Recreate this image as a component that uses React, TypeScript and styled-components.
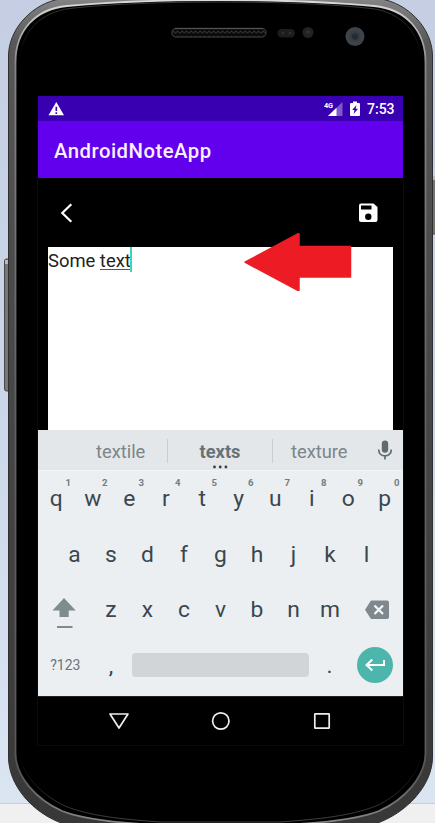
import React from "react";
import styled, { createGlobalStyle } from "styled-components";

const GlobalStyle = createGlobalStyle`
  * { box-sizing: border-box; }
  body { margin: 0; overflow: hidden; font-family: Roboto, "Liberation Sans", sans-serif; }
`;

const Desktop = styled.div`
  position: relative;
  display: flow-root;
  width: 435px;
  height: 823px;
  overflow: hidden;
  background: linear-gradient(#c5cee2 0, #cbd6e9 400px, #dbe5f2 803px, #c9ced5 803px, #c9ced5 804px, #f0f0f0 804px);
`;

const PhoneArt = styled.svg`
  position: absolute;
  inset: 0;
`;

const Screen = styled.main`
  position: relative;
  display: flex;
  flex-direction: column;
  width: 365px;
  height: 649px;
  margin: 96px 0 0 38px;
  background: #000;
`;

const StatusBar = styled.div`
  display: flex;
  align-items: center;
  height: 25px;
  padding: 1px 8px 0 10px;
  color: #fff;
  background: #3800b0;
`;

const StatusIcons = styled.div`
  display: flex;
  align-items: center;
  gap: 7px;
  margin-left: auto;
`;

const Clock = styled.span`
  width: 28px;
  font-size: 14px;
  line-height: 24px;
  font-weight: 500;
  white-space: nowrap;
`;

const AppBar = styled.header`
  display: flex;
  align-items: center;
  height: 57px;
  padding: 3px 16px 0;
  background: #6200ee;
`;

const Title = styled.h1`
  margin: 0;
  color: #f8efff;
  font-size: 20.3px;
  font-weight: 500;
  letter-spacing: 0.5px;
`;

const Toolbar = styled.div`
  display: flex;
  align-items: center;
  justify-content: space-between;
  height: 69px;
  padding: 0 25px 0 20px;
`;

const Editor = styled.section`
  height: 183px;
  margin: 0 10px;
  color: #222;
  background: #fff;
  font-size: 18.4px;
  line-height: 27px;
`;

const Line = styled.div`
  display: flex;
  white-space: pre;
`;

const Composing = styled.span`
  height: 23px;
  border-bottom: 1px solid #555;
`;

const Caret = styled.span`
  flex: none;
  width: 2px;
  height: 25px;
  margin-left: -1px;
  background: #3fd3c2;
`;

const Keyboard = styled.section`
  display: flex;
  flex-direction: column;
  height: 266px;
  background: #ebeff2;
`;

const Suggestions = styled.div`
  display: grid;
  grid-template-columns: 130px 105px 94px 36px;
  height: 41px;
  align-items: center;
  background: #e3e7ea;
  border-bottom: 1px solid #f1f4f5;
`;

const Suggestion = styled.div<{ $main?: boolean; $last?: boolean; $indent?: number }>`
  position: relative;
  height: 24px;
  margin-top: 1px;
  padding-left: ${(p) => p.$indent ?? 0}px;
  border-right: ${(p) => (p.$last ? "0" : "1px solid #c9ced1")};
  color: ${(p) => (p.$main ? "#687276" : "#7c8588")};
  font-size: 18.3px;
  line-height: 25px;
  font-weight: ${(p) => (p.$main ? 700 : 400)};
  text-align: ${(p) => (p.$main ? "center" : "left")};
`;

const MoreDots = styled.svg`
  position: absolute;
  left: 44px;
  top: 26px;
`;

const MicButton = styled.div`
  display: flex;
  justify-content: center;
  padding-right: 1px;
`;

const KeyRow = styled.div<{ $inset?: number }>`
  display: flex;
  height: 55.5px;
  padding: 0 ${(p) => p.$inset ?? 0}px;
`;

const Key = styled.div<{ $w?: number; $small?: boolean }>`
  position: relative;
  display: flex;
  align-items: center;
  justify-content: center;
  width: ${(p) => p.$w ?? 36.5}px;
  flex: none;
  color: ${(p) => (p.$small ? "#6b7578" : "#3a474e")};
  font-size: ${(p) => (p.$small ? 14 : 22.8)}px;
`;

const ShiftIcon = styled.svg`
  margin: 5px 2px 0 0;
`;

const BackspaceIcon = styled.svg`
  margin-left: 2px;
`;

const Hint = styled.sup`
  position: absolute;
  right: 3.5px;
  top: 6px;
  color: #737d81;
  font-size: 9.6px;
  line-height: 12px;
  font-weight: 700;
`;

const SpaceBar = styled.div`
  width: 177px;
  height: 24px;
  margin: 15px 2px 0 3px;
  border-radius: 4px;
  background: #d1d5d8;
`;

const EnterKey = styled.div`
  display: flex;
  align-items: center;
  justify-content: center;
  width: 36px;
  height: 36px;
  margin: 9px 0 0 9.5px;
  border-radius: 50%;
  background: #4db6ac;
`;

const NavBar = styled.nav`
  display: flex;
  align-items: center;
  justify-content: space-between;
  height: 49px;
  padding: 0 72px 0 70px;
  border-top: 1px solid #222;
`;

const CalloutArrow = styled.svg`
  position: absolute;
  left: 205px;
  top: 136px;
`;

const OUTER =
  "M8.5 56 C8.5 31 29 7 55 0 C105 -12 335 -12 386 0 C412 7 432.5 31 432.5 56 V757 C432.5 785 407 813 375 824 C320 840 120 840 64 824 C32 813 8.5 785 8.5 757 Z";
const INNER =
  "M15.5 62 C15.5 31 35 9 67 6 C110 2 160 0 220 0 C280 0 330 2 374 6 C406 9 425.5 31 425.5 62 V753 C425.5 777 404 800 379 811 C359 819 325 823 280 825 H160 C116 823 82 819 62 811 C37 800 15.5 777 15.5 753 Z";
const LIP =
  "M20 62 C20 33 40 12 70 8.5 C110 4 160 2 220 2 C280 2 330 4 371 8.5 C401 12 421 33 421 62 V752 C421 773 400 795 376 806 C350 816 320 819 280 822 H160 C120 819 90 816 65 806 C41 795 20 773 20 752 Z";

function PhoneBody() {
  return (
    <PhoneArt width="435" height="823" viewBox="0 0 435 823">
      <defs>
        <linearGradient id="rim" x1="0" x2="0" y1="0" y2="1">
          <stop offset="0" stopColor="#8c8c8c" />
          <stop offset="0.06" stopColor="#585858" />
          <stop offset="0.3" stopColor="#4c4c4c" />
          <stop offset="1" stopColor="#373737" />
        </linearGradient>
        <linearGradient id="shine" x1="0" x2="0" y1="0" y2="1">
          <stop offset="0" stopColor="#dcdcdc" />
          <stop offset="0.08" stopColor="#858585" />
          <stop offset="0.5" stopColor="#606060" />
          <stop offset="0.94" stopColor="#585858" />
          <stop offset="1" stopColor="#8b8b8b" />
        </linearGradient>
        <linearGradient id="lip" x1="0" x2="0" y1="0" y2="823" gradientUnits="userSpaceOnUse">
          <stop offset="0" stopColor="#3c3c3c" />
          <stop offset="0.07" stopColor="#000" />
          <stop offset="0.92" stopColor="#000" />
          <stop offset="1" stopColor="#444" />
        </linearGradient>
        <pattern id="mesh" width="4.5" height="5" patternUnits="userSpaceOnUse">
          <rect width="4.5" height="5" fill="#080808" />
          <path d="M0 3.5 L2 1 L4.5 3.5" stroke="#363636" fill="none" />
        </pattern>
      </defs>
      <rect x="4.5" y="259" width="6" height="132" rx="2" fill="#777" stroke="#4a4a4a" />
      <rect x="5" y="260" width="3" height="4" fill="#bbb" />
      <rect x="431" y="177" width="7" height="57" rx="1" fill="#77736f" stroke="#4a4a4a" />
      <rect x="432" y="176" width="3" height="4" fill="#bbb" />
      <path d={OUTER} fill="url(#rim)" stroke="#303030" />
      <path d={INNER} fill="#000" stroke="url(#shine)" strokeWidth="1.8" />
      <path d={LIP} fill="none" stroke="url(#lip)" />
      <rect x="172" y="28.5" width="94" height="8.5" rx="4" fill="url(#mesh)" stroke="#303030" strokeWidth="1.5" />
      <path d="M175 28.5H263" stroke="#555" />
      <rect x="277.5" y="29" width="17.5" height="8.5" rx="4.2" fill="#1d1d1d" />
      <circle cx="283" cy="33" r="1.5" fill="#303030" />
      <circle cx="290" cy="33" r="1.5" fill="#303030" />
      <circle cx="308" cy="32.5" r="5.5" fill="#222" />
      <circle cx="308" cy="32" r="2" fill="#303030" />
      <circle cx="355" cy="36.5" r="9.5" fill="#3e4349" />
      <circle cx="355" cy="36.5" r="5.5" fill="#373d45" />
      <circle cx="355" cy="36.5" r="3.2" fill="#262b34" />
      <path d="M37.5 179V745.5H403.5V179" fill="none" stroke="#0c0c0c" />
    </PhoneArt>
  );
}

const TOP_ROW = "qwertyuiop".split("");
const HOME_ROW = "asdfghjkl".split("");
const LOWER_ROW = "zxcvbnm".split("");

export default function App() {
  return (
    <>
      <GlobalStyle />
      <Desktop>
        <PhoneBody />
        <Screen>
          <StatusBar>
            <svg width="17" height="14" viewBox="0 0 17 14">
              <path d="M8.3 0 L16 13.3 H0.5Z" fill="#fff" />
              <path d="M7.5 4.8H9.100V9H7.5ZM7.5 10.3H9.100V12H7.5Z" fill="#3800b0" />
            </svg>
            <StatusIcons>
              <svg width="19" height="16" viewBox="0 0 19 16">
                <path d="M18.5 1V15H4Z" fill="#7d59cc" />
                <path d="M12.5 6.7V15H4Z" fill="#fff" />
                <text x="0" y="7" fontSize="7.3" fontWeight="700" fill="#fff" textLength="9">4G</text>
              </svg>
              <svg width="10" height="16" viewBox="0 0 10 16">
                <path d="M0 3Q0 2 1 2H3V0.5H7V2H9Q10 2 10 3V14Q10 15 9 15H1Q0 15 0 14Z" fill="#fff" />
                <path d="M6.5 4 2.2 9H4.500L3.600 13 8 7.7H5.600Z" fill="#3800b0" />
              </svg>
              <Clock>7:53</Clock>
            </StatusIcons>
          </StatusBar>
          <AppBar>
            <Title>AndroidNoteApp</Title>
          </AppBar>
          <Toolbar>
            <svg width="18" height="22" viewBox="0 0 18 22">
              <path d="M13.3 2.3 4.3 11 13.3 19.7" fill="none" stroke="#fff" strokeWidth="2.2" />
            </svg>
            <svg width="20" height="20" viewBox="0 0 20 20">
              <path d="M3 0.5H15.500L19.5 4V17Q19.5 19 17.5 19H3Q1 19 1 17V2.5Q1 0.5 3 0.5Z" fill="#fff" />
              <path d="M3 2.5H13.5V6.5H3Z" fill="#000" />
              <circle cx="10.3" cy="13.7" r="3.2" fill="#000" />
            </svg>
          </Toolbar>
          <Editor>
            <Line>
              Some <Composing>text</Composing>
              <Caret />
            </Line>
          </Editor>
          <Keyboard>
            <Suggestions>
              <Suggestion $indent={58}>textile</Suggestion>
              <Suggestion $main>
                texts
                <MoreDots width="18" height="5" viewBox="0 0 18 5">
                  <g fill="#353f44">
                    <circle cx="2.5" cy="2" r="1.4" />
                    <circle cx="8.2" cy="2" r="1.4" />
                    <circle cx="13.9" cy="2" r="1.4" />
                  </g>
                </MoreDots>
              </Suggestion>
              <Suggestion $indent={18} $last>texture</Suggestion>
              <MicButton>
                <svg width="16" height="20" viewBox="0 0 16 20">
                  <rect x="4.8" y="0.5" width="6.4" height="12.3" rx="3.2" fill="#5f6b71" />
                  <path d="M1.700 9.5C1.700 18 14.3 18 14.3 9.5M8 16V19.5" fill="none" stroke="#5f6b71" strokeWidth="1.7" />
                </svg>
              </MicButton>
            </Suggestions>
            <KeyRow>
              {TOP_ROW.map((letter, i) => (
                <Key key={letter}>
                  {letter}
                  <Hint>{(i + 1) % 10}</Hint>
                </Key>
              ))}
            </KeyRow>
            <KeyRow $inset={18.25}>
              {HOME_ROW.map((letter) => (
                <Key key={letter}>{letter}</Key>
              ))}
            </KeyRow>
            <KeyRow>
              <Key $w={54.75}>
                <ShiftIcon width="28" height="34" viewBox="0 0 28 34">
                  <path d="M14 3 25.700 15.5H18.700V22H9.500V15.5H2.500Z" fill="#7e8b8f" />
                  <path d="M7 32H22.500" stroke="#7e8b8f" strokeWidth="2" />
                </ShiftIcon>
              </Key>
              {LOWER_ROW.map((letter) => (
                <Key key={letter}>{letter}</Key>
              ))}
              <Key $w={54.75}>
                <BackspaceIcon width="26" height="20" viewBox="0 0 26 20">
                  <path d="M7 0.5H23Q25 0.5 25 2.5V17Q25 19 23 19H7L1 9.7Z" fill="#7f898d" />
                  <path d="M10.500 5.5 19 14M19 5.5 10.500 14" stroke="#f2f5f6" strokeWidth="2.3" />
                </BackspaceIcon>
              </Key>
            </KeyRow>
            <KeyRow>
              <Key $w={54.75} $small>?123</Key>
              <Key>,</Key>
              <SpaceBar />
              <Key>.</Key>
              <EnterKey>
                <svg width="22" height="16" viewBox="0 0 22 16">
                  <path d="M20 3V8H3M8.3 2.5 2.5 8 8.3 13.5" fill="none" stroke="#fff" strokeWidth="2" />
                </svg>
              </EnterKey>
            </KeyRow>
          </Keyboard>
          <NavBar>
            <svg width="22" height="18" viewBox="0 0 22 18">
              <path d="M2 2H20L11 16Z" fill="none" stroke="#eee" strokeWidth="1.7" strokeLinejoin="round" />
            </svg>
            <svg width="22" height="20" viewBox="0 0 22 20">
              <circle cx="9.8" cy="10" r="8.2" fill="none" stroke="#eee" strokeWidth="1.7" />
            </svg>
            <svg width="18" height="18" viewBox="0 0 18 18">
              <rect x="1.8" y="1.8" width="14.4" height="14.4" rx="0.5" fill="none" stroke="#eee" strokeWidth="1.7" />
            </svg>
          </NavBar>
          <CalloutArrow width="110" height="62" viewBox="0 0 110 62">
            <path d="M2 30.2 54.800 1.8H56V14.5H107.5V45H56V58.3H54.800Z" fill="#ed1c24" stroke="#ed1c24" strokeWidth="1.5" strokeLinejoin="round" />
          </CalloutArrow>
        </Screen>
      </Desktop>
    </>
  );
}
